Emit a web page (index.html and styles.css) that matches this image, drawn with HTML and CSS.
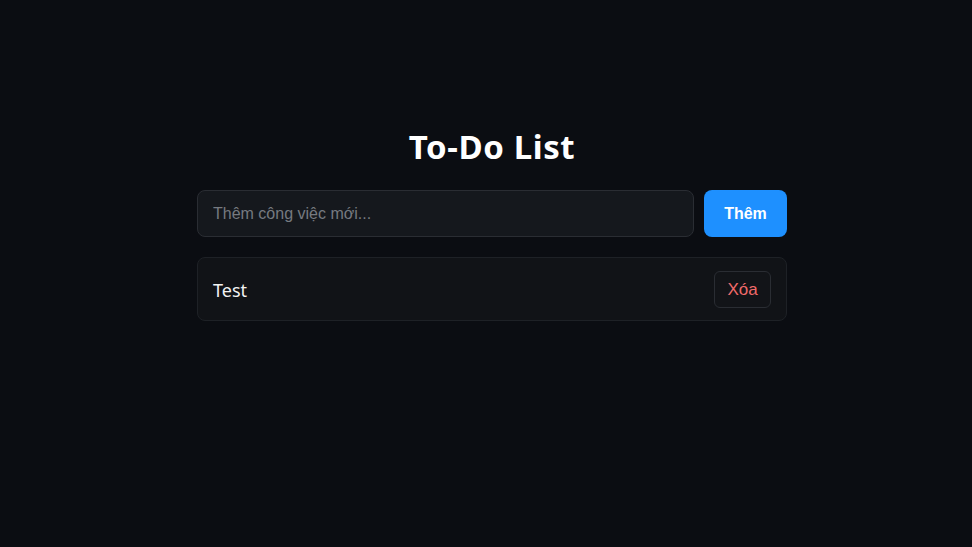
FILE: index.html
```html
<!DOCTYPE html>
<html lang="vi">
<head>
<meta charset="utf-8">
<title>To-Do List</title>
<link rel="stylesheet" href="styles.css">
</head>
<body>
<main class="app">
  <h1 class="title">To-Do List</h1>
  <form class="add-row" onsubmit="return false">
    <input class="add-input" type="text" placeholder="Thêm công việc mới...">
    <button class="add-btn" type="submit">Thêm</button>
  </form>
  <ul class="list">
    <li class="item">
      <span class="item-text">Test</span>
      <button class="del-btn" type="button">Xóa</button>
    </li>
  </ul>
</main>
</body>
</html>
```
FILE: styles.css
```css
* { box-sizing: border-box; }
html, body { margin: 0; padding: 0; }
body {
  background: #0b0d12;
  color: #f0f2f5;
  font-family: "Noto Sans", "Open Sans", sans-serif;
  min-height: 547px;
  padding-left: 12px;
}
.app {
  width: 590px;
  margin: 0 auto;
  padding-top: 124px;
}
.title {
  margin: 0 0 20px;
  text-align: center;
  font-size: 33px;
  letter-spacing: 0.6px;
  line-height: 46px;
  font-weight: 700;
  color: #ffffff;
}
.add-row {
  display: flex;
  gap: 10px;
  margin: 0;
}
.add-input {
  flex: 1;
  height: 47px;
  padding: 0 15px;
  background: #15181d;
  border: 1px solid #2a2d33;
  border-radius: 8px;
  color: #e6e6e6;
  font-family: "Liberation Sans", Arial, sans-serif;
  font-size: 16px;
  outline: none;
}
.add-input::placeholder { color: #767a80; }
.add-btn {
  width: 83px;
  height: 47px;
  border: none;
  border-radius: 8px;
  background: #1e90ff;
  color: #ffffff;
  font-family: "Liberation Sans", Arial, sans-serif;
  font-size: 16px;
  font-weight: 700;
  cursor: pointer;
}
.list {
  list-style: none;
  margin: 20px 0 0;
  padding: 0;
}
.item {
  display: flex;
  align-items: center;
  justify-content: space-between;
  height: 64px;
  padding: 0 15px;
  background: #111317;
  border: 1px solid #1e2126;
  border-radius: 8px;
}
.item-text {
  font-size: 18px;
  color: #f2f2f2;
  padding-top: 2px;
}
.del-btn {
  width: 57px;
  height: 37px;
  margin-top: 1px;
  background: #121418;
  border: 1px solid #2a2d33;
  border-radius: 6px;
  color: #f06a6a;
  font-family: "Liberation Sans", Arial, sans-serif;
  font-size: 17px;
  cursor: pointer;
}
```
